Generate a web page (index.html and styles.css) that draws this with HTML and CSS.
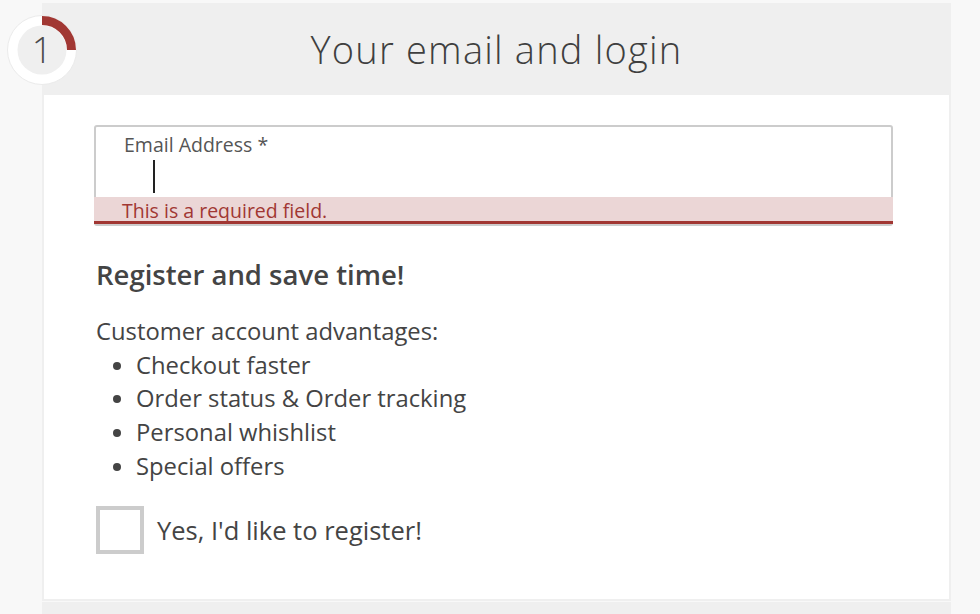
FILE: index.html
```html
<!DOCTYPE html>
<html lang="en">
<head>
    <meta charset="UTF-8">
    <meta name="viewport" content="width=device-width, initial-scale=1.0">
    <title>Checkout</title>
    <link rel="stylesheet" href="styles.css">
</head>
<body>
    <div class="steps">
        <div class="step">
            <div class="step-header">
                <div class="step-badge">
                    <svg class="step-ring" width="72" height="72" viewBox="0 0 72 72">
                        <circle cx="36" cy="36" r="34.5" fill="#fff" stroke="#ebebeb" stroke-width="1"/>
                        <circle cx="36" cy="36" r="24.5" fill="#efefef"/>
                        <path d="M36 6.5 A29.5 29.5 0 0 1 65.5 36" fill="none" stroke="#a13733" stroke-width="9"/>
                    </svg>
                    <span class="step-number">1</span>
                </div>
                <h2>Your email and login</h2>
            </div>
            <div class="step-body">
                <div class="field has-error">
                    <label for="email">Email Address *</label>
                    <input type="email" id="email">
                    <span class="caret"></span>
                    <div class="field-error">This is a required field.</div>
                </div>

                <h3>Register and save time!</h3>
                <p class="advantages-title">Customer account advantages:</p>
                <ul class="advantages">
                    <li>Checkout faster</li>
                    <li>Order status &amp; Order tracking</li>
                    <li>Personal whishlist</li>
                    <li>Special offers</li>
                </ul>

                <label class="checkbox">
                    <input type="checkbox">
                    <span class="checkbox-box"></span>
                    <span>Yes, I'd like to register!</span>
                </label>
            </div>
        </div>

        <!-- next step, only its top edge is in view -->
        <div class="step">
            <div class="step-header">
                <div class="step-badge">
                    <svg class="step-ring" width="72" height="72" viewBox="0 0 72 72">
                        <circle cx="36" cy="36" r="34.5" fill="#fff" stroke="#ebebeb" stroke-width="1"/>
                        <circle cx="36" cy="36" r="24.5" fill="#efefef"/>
                        <path d="M36 6.5 A29.5 29.5 0 0 1 65.5 36" fill="none" stroke="#a13733" stroke-width="9"/>
                    </svg>
                </div>
            </div>
        </div>
    </div>
</body>
</html>
```

FILE: styles.css
```css
body {
    font-family: 'Open Sans', 'Liberation Sans', sans-serif;
    margin: 0;
    padding: 0;
    background-color: #f8f8f8;
    color: #444;
}
.steps {
    width: 909px;
    margin-left: 42px;
    padding-top: 3px;
}
.step {
    margin-bottom: 1px;
}
.step-header {
    position: relative;
    height: 92px;
    background-color: #efefef;
    display: flex;
    align-items: center;
    justify-content: center;
}
.step-header h2 {
    margin: 0;
    font-weight: 300;
    font-size: 38px;
    letter-spacing: 1.2px;
    color: #3f3f3f;
}
.step-badge {
    position: absolute;
    left: -36px;
    top: 11px;
    width: 72px;
    height: 72px;
}
.step-ring {
    display: block;
}
.step-number {
    position: absolute;
    left: 0;
    top: 0;
    width: 72px;
    line-height: 72px;
    text-align: center;
    font-weight: 300;
    font-size: 36px;
    color: #4a4a4a;
}
.step-body {
    background-color: #fff;
    border: 2px solid #efefef;
    border-top: none;
    padding: 30px 52px 45px;
}
.field {
    position: relative;
    width: 795px;
    margin-left: -2px;
    border: 2px solid #ccc;
    border-radius: 3px;
    background: #fff;
}
.field label {
    display: block;
    padding: 5px 0 0 28px;
    font-size: 19.5px;
    line-height: 26px;
    color: #555;
}
.field input {
    display: block;
    width: 100%;
    box-sizing: border-box;
    border: none;
    outline: none;
    height: 39px;
    padding: 0 28px 0 57px;
    font-family: inherit;
    font-size: 19.5px;
    color: #444;
    background: transparent;
}
.caret {
    position: absolute;
    left: 57px;
    top: 33px;
    width: 2px;
    height: 33px;
    background-color: #222;
}
.field-error {
    margin: 0 -2px;
    padding: 0 28px;
    height: 24px;
    line-height: 27px;
    background-color: #ebd6d6;
    border-bottom: 3px solid #a13733;
    font-size: 19.5px;
    color: #a13733;
}
h3 {
    margin: 31px 0 0;
    font-size: 27.5px;
    line-height: 36px;
    font-weight: 600;
    color: #444;
}
.advantages-title {
    margin: 22px 0 0;
    font-size: 23.8px;
    line-height: 33.7px;
}
.advantages {
    margin: 0;
    padding-left: 40px;
    font-size: 23.8px;
    line-height: 33.7px;
}
.checkbox {
    display: flex;
    align-items: center;
    gap: 13px;
    margin-top: 22px;
    font-size: 25.5px;
    cursor: pointer;
}
.checkbox input {
    display: none;
}
.checkbox-box {
    width: 40px;
    height: 40px;
    border: 4px solid #ccc;
    background: #fff;
}
```
